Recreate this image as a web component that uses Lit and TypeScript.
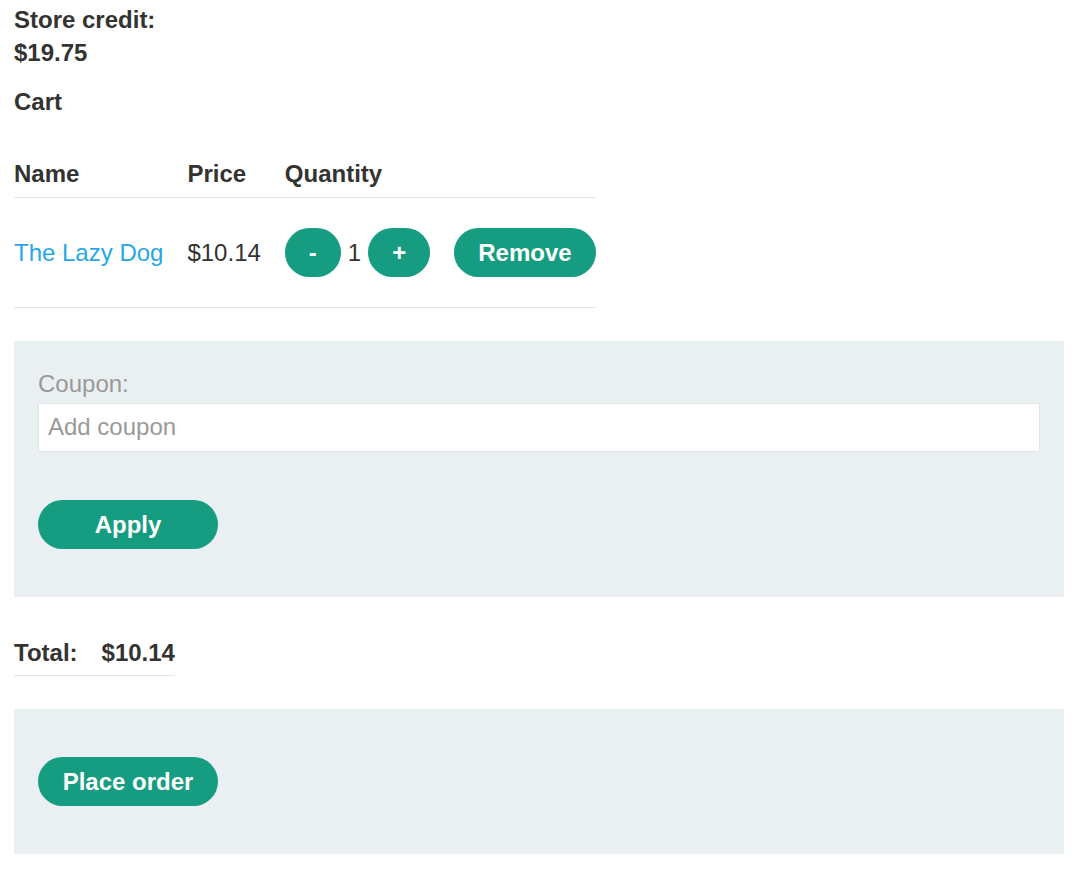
import { LitElement, html, css } from "lit";
import { customElement, state } from "lit/decorators.js";

@customElement("app-root")
export class AppRoot extends LitElement {
  @state() private quantity = 1;

  static styles = css`
    :host {
      display: block;
      padding: 3px 24px 24px 14px;
      background: #fff;
      color: #333332;
      font-family: "Liberation Sans", Arial, sans-serif;
      font-size: 24px;
      line-height: 33px;
    }
    .credit,
    .title {
      margin: 0;
      font-size: 24px;
      font-weight: bold;
    }
    .title {
      margin-top: 16px;
    }
    table {
      border-collapse: collapse;
    }
    th,
    td {
      padding: 0 24px 0 0;
      border-bottom: 1px solid #e4e4e4;
      text-align: left;
      white-space: nowrap;
    }
    th:last-child,
    td:last-child {
      padding-right: 0;
    }
    .items {
      margin: 39px 0 33px;
    }
    .items th {
      padding-bottom: 7px;
    }
    .items td {
      padding-top: 30px;
      padding-bottom: 30px;
    }
    .stepper {
      display: flex;
      align-items: center;
      gap: 7px;
    }
    a {
      color: #29a7e6;
      text-decoration: none;
    }
    button {
      height: 49px;
      padding: 0 24px;
      border: 0;
      border-radius: 25px;
      background: #169c80;
      color: #fff;
      font: bold 24px/33px "Liberation Sans", Arial, sans-serif;
      cursor: pointer;
    }
    .panel {
      display: flex;
      flex-direction: column;
      align-items: flex-start;
      padding: 48px 24px;
      background: #eaeff2;
    }
    .coupon {
      padding-top: 26px;
    }
    label {
      color: #999;
    }
    input {
      box-sizing: border-box;
      width: 100%;
      height: 49px;
      margin: 3px 0 48px;
      padding: 0 9px 2px;
      border: 1px solid #e4e4e4;
      border-radius: 0;
      background: #fff;
      color: #333332;
      font: 24px/33px "Liberation Sans", Arial, sans-serif;
    }
    input::placeholder {
      color: #999;
      opacity: 1;
    }
    .wide {
      min-width: 180px;
    }
    .total {
      margin: 39px 0 33px;
    }
    .total th,
    .total td {
      padding-bottom: 6px;
      font-weight: bold;
    }
  `;

  private step(delta: number) {
    this.quantity = Math.max(1, this.quantity + delta);
  }

  render() {
    return html`
      <main>
        <p class="credit">Store credit:<br />$19.75</p>
        <h1 class="title">Cart</h1>
        <table class="items">
          <thead>
            <tr>
              <th>Name</th>
              <th>Price</th>
              <th>Quantity</th>
              <th></th>
            </tr>
          </thead>
          <tbody>
            <tr>
              <td><a href="#product">The Lazy Dog</a></td>
              <td>$10.14</td>
              <td>
                <div class="stepper">
                  <button aria-label="Decrease quantity" @click=${() => this.step(-1)}>-</button>
                  <span>${this.quantity}</span>
                  <button aria-label="Increase quantity" @click=${() => this.step(1)}>+</button>
                </div>
              </td>
              <td><button>Remove</button></td>
            </tr>
          </tbody>
        </table>
        <form class="panel coupon" @submit=${(e: Event) => e.preventDefault()}>
          <label for="coupon">Coupon:</label>
          <input id="coupon" name="coupon" type="text" placeholder="Add coupon" />
          <button class="wide" type="submit">Apply</button>
        </form>
        <table class="total">
          <tbody>
            <tr>
              <th scope="row">Total:</th>
              <td>$10.14</td>
            </tr>
          </tbody>
        </table>
        <form class="panel" @submit=${(e: Event) => e.preventDefault()}>
          <button class="wide" type="submit">Place order</button>
        </form>
      </main>
    `;
  }
}
